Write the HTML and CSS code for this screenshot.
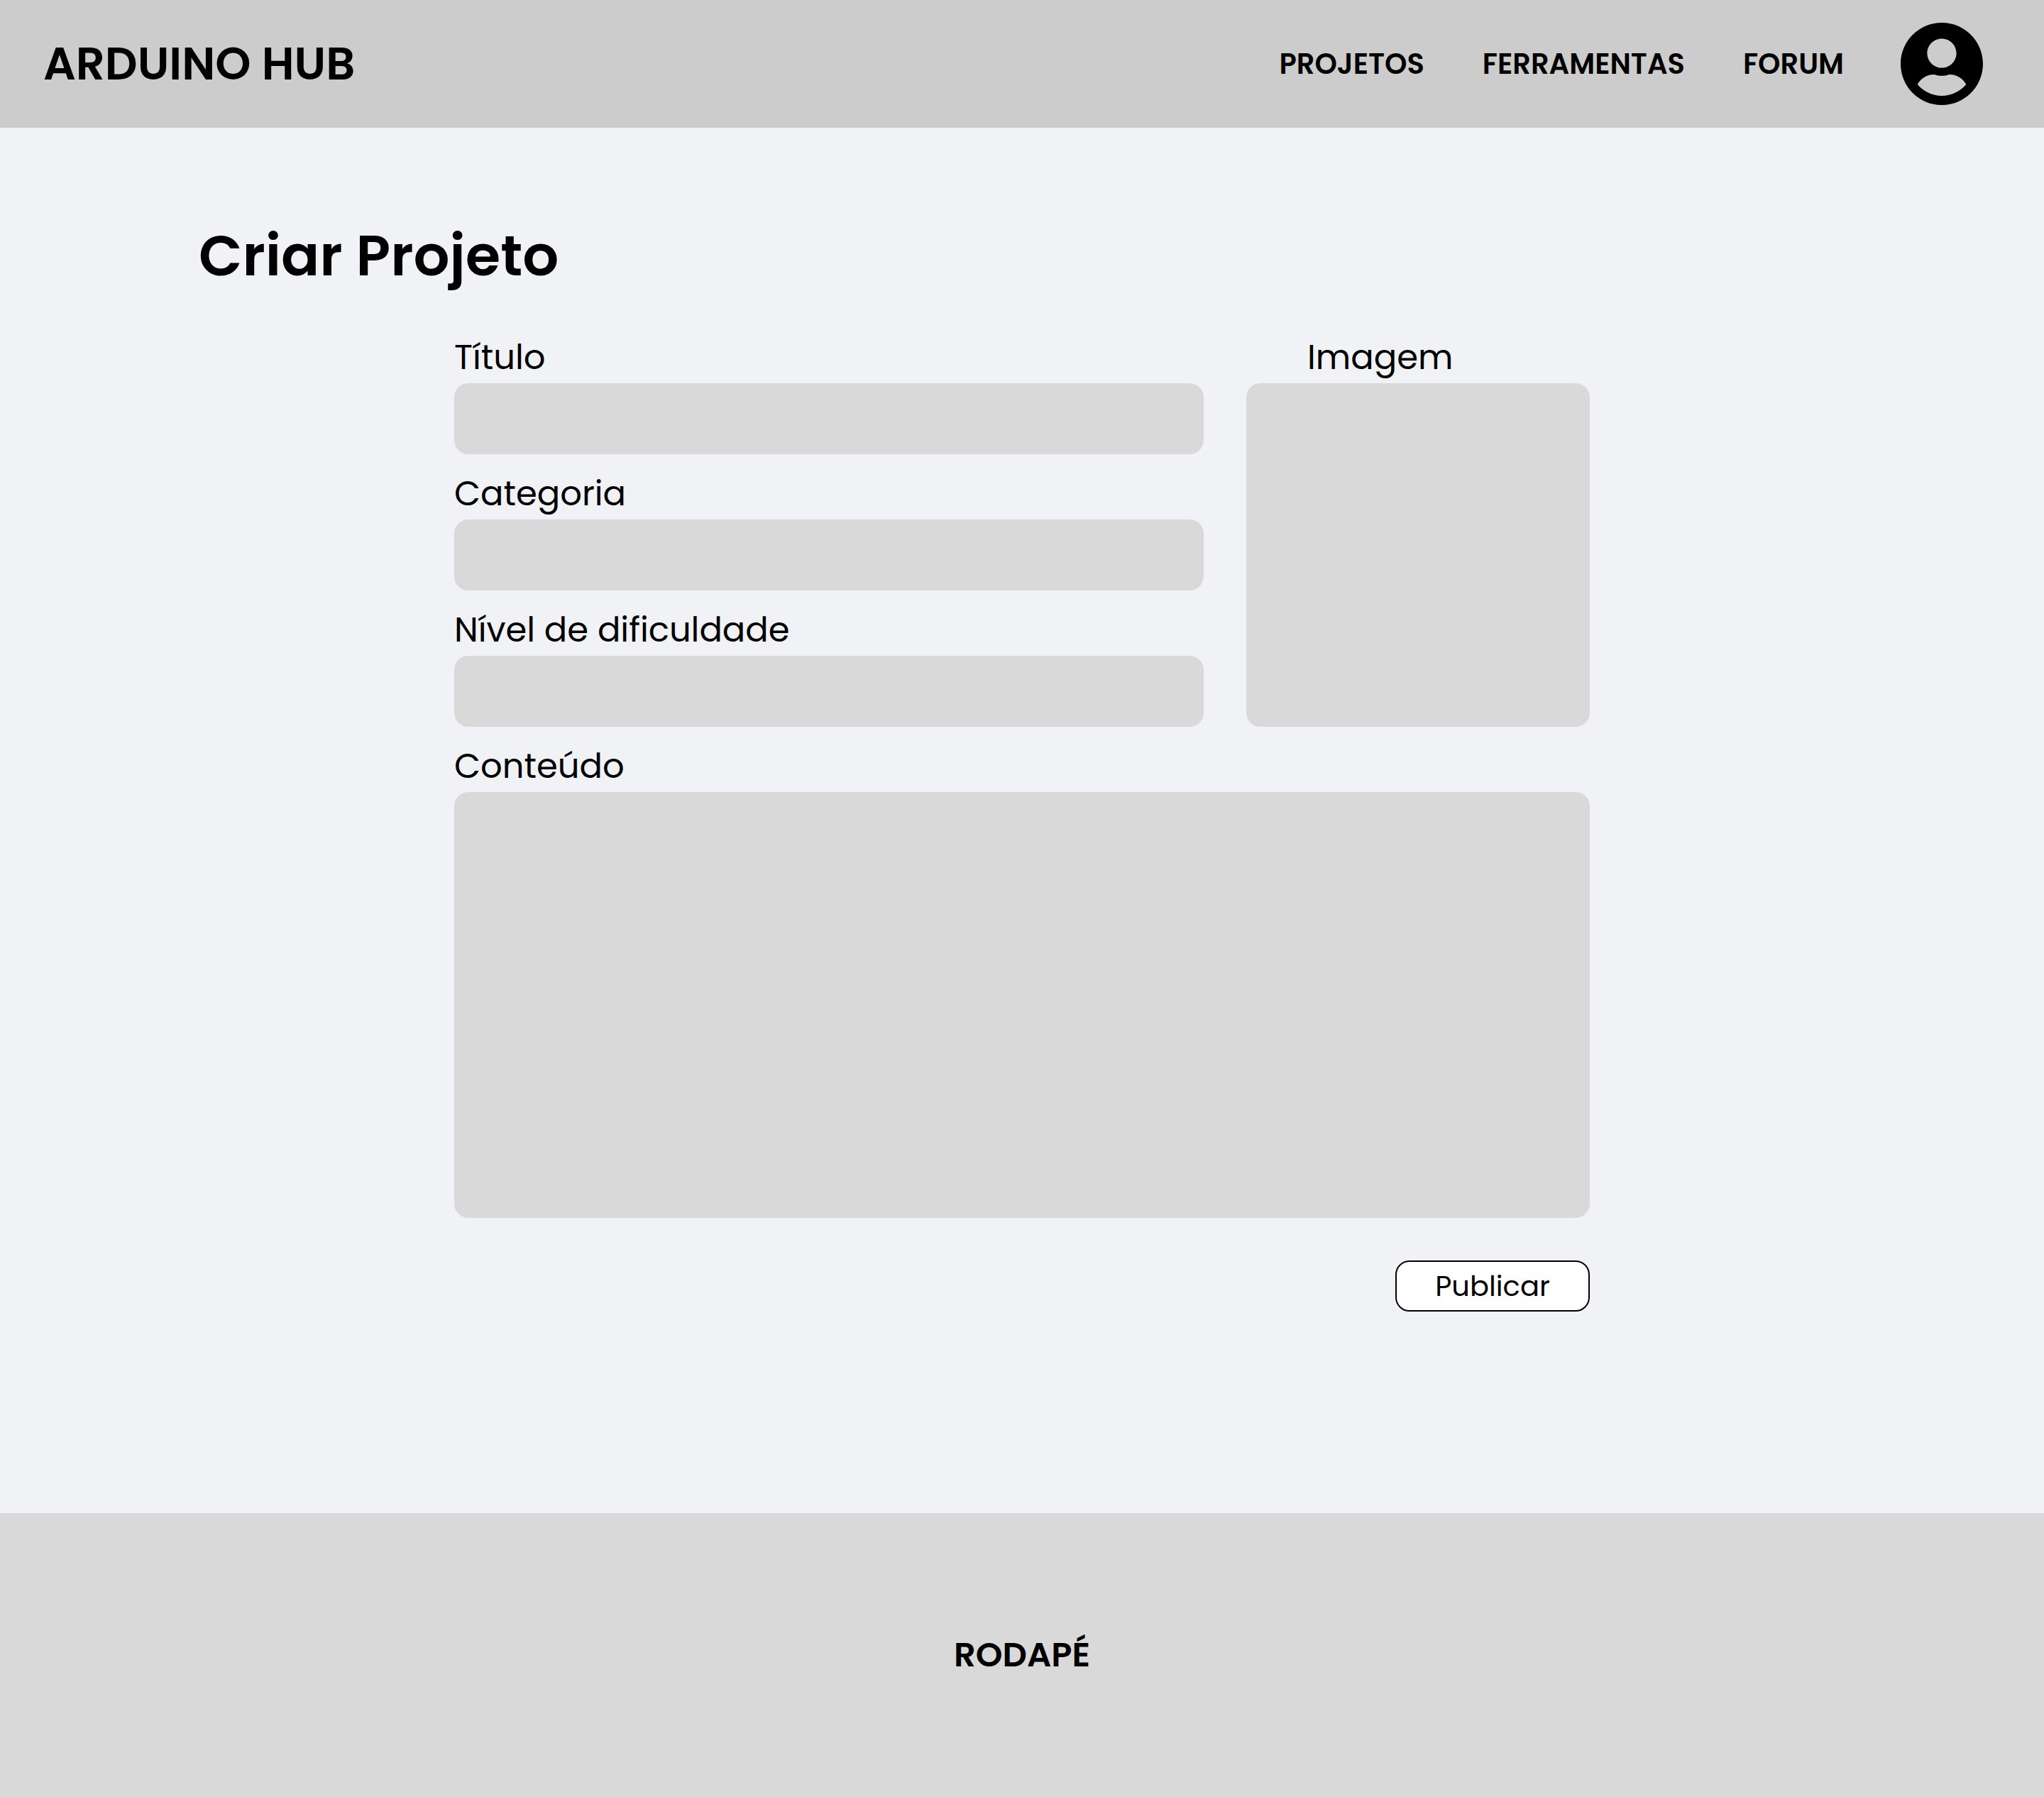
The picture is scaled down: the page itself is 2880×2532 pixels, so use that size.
FILE: index.html
```html
<!DOCTYPE html>
<html lang="pt-BR">
<head>
  <meta charset="utf-8">
  <meta name="viewport" content="width=device-width, initial-scale=1">
  <title>Criar Projeto - Arduino Hub</title>
  <link rel="stylesheet" href="styles.css">
</head>
<body>
  <header class="topbar">
    <a class="brand" href="#">ARDUINO HUB</a>
    <div class="menu">
      <nav class="nav">
        <a class="nav-link" href="#">PROJETOS</a>
        <a class="nav-link" href="#">FERRAMENTAS</a>
        <a class="nav-link" href="#">FORUM</a>
      </nav>
      <a class="profile" href="#" aria-label="Perfil">
        <svg class="profile-icon" viewBox="0 8 496 496" aria-hidden="true">
          <path d="M248 8C111 8 0 119 0 256s111 248 248 248 248-111 248-248S385 8 248 8zm0 96c48.6 0 88 39.4 88 88s-39.4 88-88 88-88-39.4-88-88 39.4-88 88-88zm0 344c-58.7 0-111.3-26.6-146.5-68.2 18.8-35.4 55.6-59.8 98.5-59.8 2.4 0 4.8.4 7.1 1.1 13 4.2 26.6 6.9 40.9 6.9 14.3 0 28-2.7 40.9-6.9 2.3-.7 4.7-1.1 7.1-1.1 42.9 0 79.7 24.4 98.5 59.8C359.3 421.4 306.7 448 248 448z"/>
        </svg>
      </a>
    </div>
  </header>

  <main class="content">
    <h1 class="page-title">Criar Projeto</h1>
    <form class="form">
      <div class="form-top">
        <div class="fields">
          <div class="field">
            <label class="label" for="titulo">Título</label>
            <input class="control" type="text" id="titulo">
          </div>
          <div class="field">
            <label class="label" for="categoria">Categoria</label>
            <input class="control" type="text" id="categoria">
          </div>
          <div class="field">
            <label class="label" for="nivel">Nível de dificuldade</label>
            <input class="control" type="text" id="nivel">
          </div>
        </div>
        <div class="field image-field">
          <label class="label image-label" for="imagem">Imagem</label>
          <button class="control image-drop" type="button" id="imagem"></button>
        </div>
      </div>
      <div class="field">
        <label class="label" for="conteudo">Conteúdo</label>
        <textarea class="control editor" id="conteudo"></textarea>
      </div>
      <button class="submit" type="submit">Publicar</button>
    </form>
  </main>

  <footer class="footer">RODAPÉ</footer>
</body>
</html>
```

FILE: styles.css
```css
* {
  box-sizing: border-box;
}

body {
  margin: 0;
  min-height: 100vh;
  display: flex;
  flex-direction: column;
  background: #f0f2f6;
  color: #000;
  font-family: Poppins, Inter, "Liberation Sans", sans-serif;
}

a {
  color: inherit;
  text-decoration: none;
}

.topbar {
  display: flex;
  align-items: center;
  justify-content: space-between;
  padding: 32px 86px 32px 61px;
  background: #ccc;
}

.brand {
  font-size: 64px;
  line-height: 96px;
  font-weight: 600;
}

.menu {
  display: flex;
  align-items: center;
  gap: 80px;
}

.nav {
  display: flex;
  align-items: center;
  gap: 82px;
}

.nav-link {
  font-size: 40px;
  line-height: 60px;
  font-weight: 600;
}

.profile-icon {
  display: block;
  width: 116px;
  height: 116px;
}

.content {
  flex: 1;
  padding: 120px 280px;
}

.page-title {
  margin: 0 0 48px;
  font-size: 80px;
  line-height: 120px;
  font-weight: 600;
}

.form {
  display: flex;
  flex-direction: column;
  gap: 20px;
  max-width: 1600px;
  margin: 0 auto;
}

.form-top {
  display: flex;
  gap: 60px;
}

.fields {
  flex: 1;
  display: flex;
  flex-direction: column;
  gap: 20px;
}

.field {
  display: flex;
  flex-direction: column;
}

.label {
  font-size: 48px;
  line-height: 72px;
}

.control {
  width: 100%;
  height: 100px;
  padding: 0 32px;
  border: 0;
  border-radius: 20px;
  background: #d9d9d9;
  color: inherit;
  font: inherit;
  font-size: 40px;
}

.image-field {
  width: 484px;
}

.image-label {
  padding-left: 86px;
}

.image-drop {
  flex: 1;
  cursor: pointer;
}

.editor {
  display: block;
  height: 600px;
  padding: 24px 32px;
  resize: none;
}

.submit {
  align-self: flex-end;
  width: 274px;
  height: 72px;
  margin-top: 40px;
  padding: 0;
  border: 2px solid #000;
  border-radius: 20px;
  background: #fff;
  color: inherit;
  font: inherit;
  font-size: 40px;
  cursor: pointer;
}

.footer {
  display: flex;
  align-items: center;
  justify-content: center;
  height: 400px;
  background: #d9d9d9;
  font-size: 48px;
  line-height: 72px;
  font-weight: 600;
}
```
